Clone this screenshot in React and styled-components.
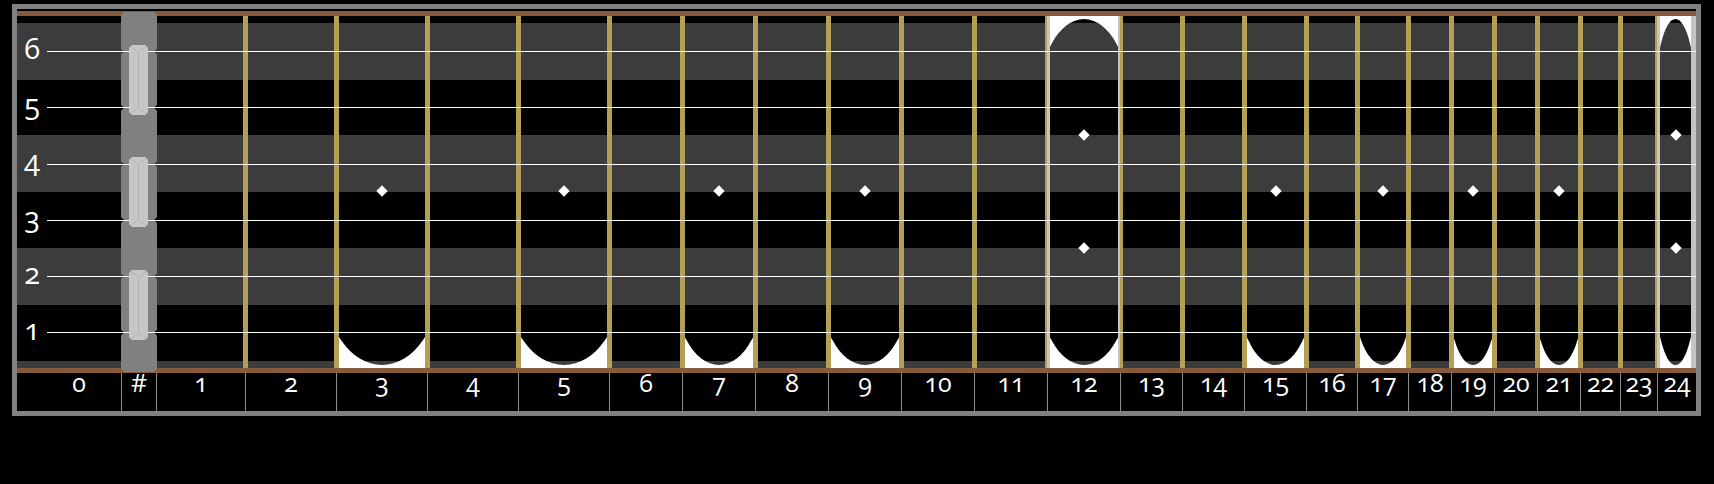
import React from 'react';
import styled, { createGlobalStyle } from 'styled-components';

const GlobalStyle = createGlobalStyle`
  body {
    margin: 0;
    background: #000;
  }
`;

const GOLD = '#b4a054';
const PEARL = '#c4c4c4';
const BROWN = '#875a3c';

// widths of fret 1..24, taken from the fret spacing
const FRETS = [89, 91, 91, 91, 91, 73, 73, 73, 73, 73, 73, 73, 62, 62, 62, 51, 51, 43, 43, 43, 43, 40, 37, 39];
const SINGLE = [3, 5, 7, 9, 15, 17, 19, 21];
const DOUBLE = [12, 24];
const STRINGS = [6, 5, 4, 3, 2, 1];
const NUT_SEGS = [39.5, 56.2, 56.2, 56.2, 56.2, 56.2, 39.5];

const Frame = styled.div`
  margin: 4px 0 0 12px;
  width: 1679px;
  border: 5px solid #808080;
  padding-top: 2px;
  background: #000;
  color: #fff;
  font-family: "Open Sans", "Liberation Sans", sans-serif;
  font-variant-numeric: oldstyle-nums;
`;

const Fretboard = styled.div`
  position: relative;
  display: flex;
  height: 352px;
  border-top: 5px solid ${BROWN};
  border-bottom: 5px solid ${BROWN};
  background: linear-gradient(
    to bottom,
    #000 0 7px,
    #3c3c3c 7px 64px,
    #000 64px 119px,
    #3c3c3c 119px 176px,
    #000 176px 232px,
    #3c3c3c 232px 289px,
    #000 289px 345px,
    #3c3c3c 345px
  );
`;

const OpenCol = styled.div`
  width: ${p => p.$w}px;
  flex-shrink: 0;
`;

const StringLabels = styled.div`
  width: 23px;
  display: flex;
  flex-direction: column;
  padding-top: 4px;
`;

const StringLabel = styled.div`
  height: 56.2px;
  line-height: 56.2px;
  font-size: 29px;
  text-align: right;
`;

const NutCol = styled.div`
  position: relative;
  width: ${p => p.$w}px;
  flex-shrink: 0;
`;

const Nut = styled.div`
  position: relative;
  width: 36px;
  height: 360px;
  margin-top: -4px;
  display: flex;
  flex-direction: column;
`;

const NutSeg = styled.div`
  height: ${p => p.$h}px;
  flex-shrink: 0;
  background: #808080;
  clip-path: polygon(3px 0, calc(100% - 3px) 0, 100% 3px, 100% calc(100% - 3px), calc(100% - 3px) 100%, 3px 100%, 0 calc(100% - 3px), 0 3px);
`;

const Saddles = styled.div`
  position: absolute;
  top: 33px;
  left: 8px;
  z-index: 2;
  display: flex;
  flex-direction: column;
  gap: 42.4px;
  svg { display: block; }
`;

const FretCol = styled.div`
  position: relative;
  box-sizing: border-box;
  width: ${p => p.$w}px;
  flex-shrink: 0;
  display: flex;
  flex-direction: column;
  overflow: hidden;
  border-left: ${p => (p.$first ? 0 : 3)}px solid ${p => (p.$hi ? PEARL : GOLD)};
  border-right: ${p => (p.$last ? 5 : 2)}px solid ${p => (p.$hi ? PEARL : GOLD)};
`;

const Well = styled.div`
  flex: 1;
  align-self: center;
  width: 135%;
  flex-shrink: 0;
  margin: ${p => (p.$double ? 3 : 0)}px 0 3px;
  border-radius: ${p => (p.$double ? '50% / 85px' : '0 0 50% 50% / 0 0 85px 85px')};
  box-shadow: 0 0 0 80px #fff;
`;

const Dot = styled.div`
  position: absolute;
  left: 50%;
  top: ${p => p.$y}px;
  width: 8px;
  height: 8px;
  background: #fff;
  transform: translate(-50%, -50%) rotate(45deg);
`;

const Strings = styled.div`
  position: absolute;
  top: 0;
  left: 30px;
  right: 0;
  z-index: 1;
  display: flex;
  flex-direction: column;
  gap: 55.25px;
  padding-top: 35px;
  pointer-events: none;
`;

const StringLine = styled.div`
  height: 1px;
  background: #fff;
`;

const LabelRow = styled.div`
  display: flex;
  height: 38px;
`;

const LabelCell = styled.div`
  box-sizing: border-box;
  width: ${p => p.$w}px;
  flex-shrink: 0;
  border-left: ${p => (p.$first ? 'none' : '1px solid #8c8c8c')};
  padding-left: ${p => p.$pad || 0}px;
  text-align: center;
  font-size: 25px;
  line-height: 19px;
`;

function Saddle() {
  return (
    <svg width="19" height="70" viewBox="0 0 19 70">
      <polygon points="3,0 16,0 19,3 19,67 16,70 3,70 0,67 0,3" fill="#c6c6c6" />
      <line x1="9.5" y1="7" x2="9.5" y2="63" stroke="#b2b2b2" strokeWidth="1" />
      <polyline points="1,1 9.5,7 18,1" fill="none" stroke="#b2b2b2" strokeWidth="1" />
      <polyline points="1,69 9.5,63 18,69" fill="none" stroke="#b2b2b2" strokeWidth="1" />
    </svg>
  );
}

export default function App() {
  return (
    <>
      <GlobalStyle />
      <Frame>
        <Fretboard>
          <OpenCol $w={104}>
            <StringLabels>
              {STRINGS.map(s => <StringLabel key={s}>{s}</StringLabel>)}
            </StringLabels>
          </OpenCol>
          <NutCol $w={35}>
            <Nut>
              {NUT_SEGS.map((h, i) => <NutSeg key={i} $h={h} />)}
              <Saddles>
                <Saddle />
                <Saddle />
                <Saddle />
              </Saddles>
            </Nut>
          </NutCol>
          {FRETS.map((w, i) => {
            const n = i + 1;
            const single = SINGLE.includes(n);
            const double = DOUBLE.includes(n);
            return (
              <FretCol key={n} $w={w} $first={n === 1} $last={n === 24} $hi={double}>
                {(single || double) && <Well $double={double} />}
                {single && <Dot $y={175.3} />}
                {double && <Dot $y={119.3} />}
                {double && <Dot $y={231.8} />}
              </FretCol>
            );
          })}
          <Strings>
            {STRINGS.map(s => <StringLine key={s} />)}
          </Strings>
        </Fretboard>
        <LabelRow>
          <LabelCell $w={104} $first $pad={20}>0</LabelCell>
          <LabelCell $w={35}>#</LabelCell>
          {FRETS.map((w, i) => <LabelCell key={i} $w={w}>{i + 1}</LabelCell>)}
        </LabelRow>
      </Frame>
    </>
  );
}
